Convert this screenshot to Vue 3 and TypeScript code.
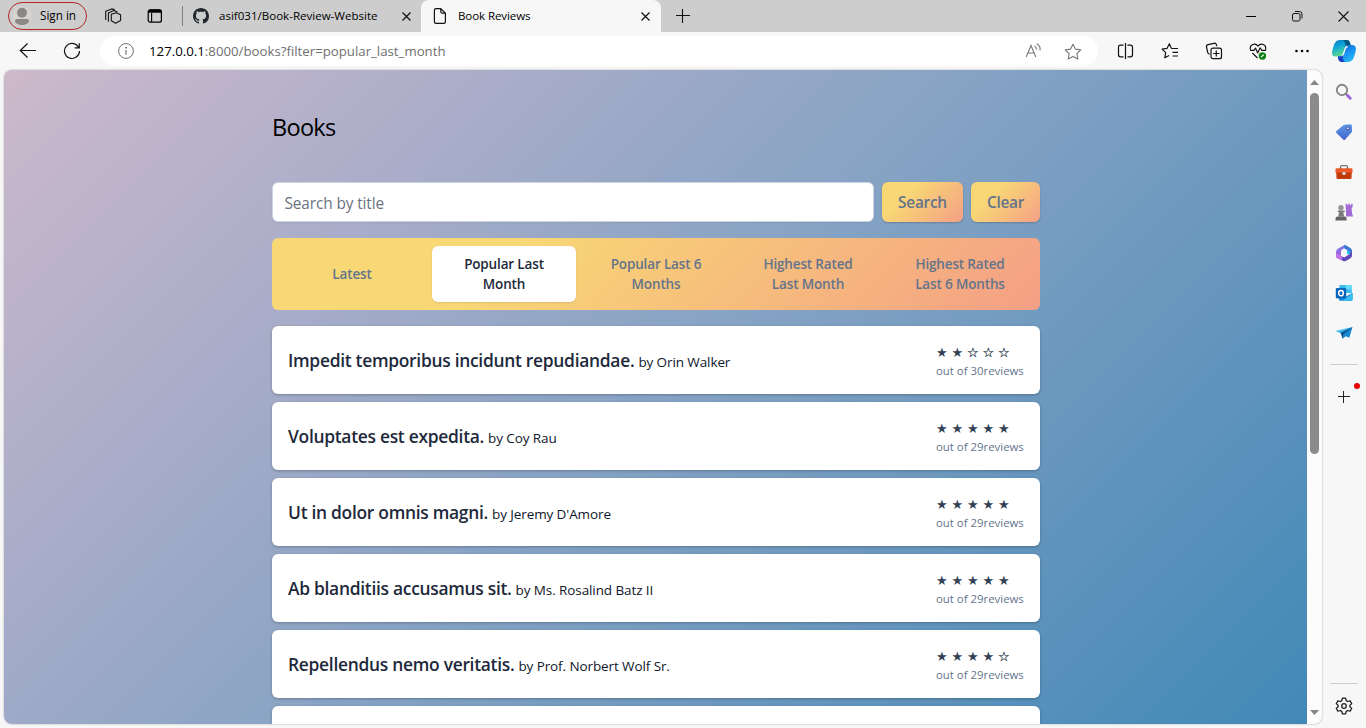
<script setup lang="ts">
interface Filter { lines: string[]; active: boolean }
interface Book { title: string; author: string; rating: number; reviews: number }

const filters: Filter[] = [
  { lines: ['Latest'], active: false },
  { lines: ['Popular Last', 'Month'], active: true },
  { lines: ['Popular Last 6', 'Months'], active: false },
  { lines: ['Highest Rated', 'Last Month'], active: false },
  { lines: ['Highest Rated', 'Last 6 Months'], active: false },
]

const books: Book[] = [
  { title: 'Impedit temporibus incidunt repudiandae.', author: 'Orin Walker', rating: 2, reviews: 30 },
  { title: 'Voluptates est expedita.', author: 'Coy Rau', rating: 5, reviews: 29 },
  { title: 'Ut in dolor omnis magni.', author: "Jeremy D'Amore", rating: 5, reviews: 29 },
  { title: 'Ab blanditiis accusamus sit.', author: 'Ms. Rosalind Batz II', rating: 5, reviews: 29 },
  { title: 'Repellendus nemo veritatis.', author: 'Prof. Norbert Wolf Sr.', rating: 4, reviews: 29 },
]
</script>

<template>
  <div class="window">
    <header class="tabstrip">
      <div class="signin">
        <svg width="20" height="20" viewBox="0 0 20 20"><circle cx="10" cy="10" r="10" fill="#d6d3d0" /><circle cx="10" cy="6.8" r="5" fill="#8b8886" /><path d="M3 14.8q0-1.800 2-1.800h10q2 0 2 1.800c0 2.600-3.200 4.200-7 4.200s-7-1.600-7-4.200z" fill="#8b8886" /></svg>
        <span class="label">Sign in</span>
      </div>
      <svg class="workspaces" width="18" height="18" viewBox="0 0 18 18" fill="none" stroke="#111" stroke-width="1.1" stroke-linejoin="round" stroke-linecap="round"><path d="M7.300 7.200l5-1.500 4.300 2.100v5.800l-5 2.700-4.300-2.500z" /><path d="M4.400 14.300V5.900l5.400-2.300 3.200 1.100M1.700 12.500V4.300l6-2.400 2.700.7" /></svg>
      <svg class="tabmenu" width="16" height="16" viewBox="0 0 16 16"><rect x="1.2" y="1.8" width="13.2" height="12.400" rx="2" fill="none" stroke="#000" stroke-width="1.2" /><path d="M1 4.800V3.600Q1 1.400 3.200 1.400h9.300q2.200 0 2.200 2.200v1.200z" /><path d="M4.600 5v9" stroke="#000" stroke-width="1.1" /></svg>
      <i class="divider"></i>
      <div class="tab">
        <svg width="16" height="16" viewBox="0 0 16 16" fill="#24292f"><path d="M8 0C3.58 0 0 3.58 0 8c0 3.54 2.29 6.53 5.47 7.59.4.07.55-.17.55-.38 0-.19-.01-.82-.01-1.49-2.01.37-2.53-.49-2.69-.94-.09-.23-.48-.94-.82-1.13-.28-.15-.68-.52-.01-.53.63-.01 1.08.58 1.23.82.72 1.21 1.87.87 2.33.66.07-.52.28-.87.51-1.07-1.78-.2-3.64-.89-3.64-3.95 0-.87.31-1.59.82-2.15-.08-.2-.36-1.02.08-2.12 0 0 .67-.21 2.2.82.64-.18 1.32-.27 2-.27s1.360.09 2 .27c1.530-1.040 2.200-.82 2.200-.82.440 1.100.160 1.920.080 2.120.510.560.820 1.270.820 2.150 0 3.070-1.870 3.750-3.650 3.950.290.250.540.730.540 1.480 0 1.070-.01 1.930-.01 2.200 0 .210.150.460.550.380A8.010 8.010 0 0 0 16 8c0-4.420-3.580-8-8-8z" /></svg>
        <span class="tab-title label">asif031/Book-Review-Website</span>
        <svg class="x" width="9" height="9" viewBox="0 0 9 9" stroke="#111" stroke-width="1.2"><path d="M.5.5l8 8M8.500.5l-8 8" /></svg>
      </div>
      <div class="tab active">
        <svg width="14" height="18" viewBox="0 0 14 18" fill="none" stroke="#111" stroke-width="1.2" stroke-linejoin="round"><path d="M3 1.600h4.800l4.600 4.600v8.600q0 1.600-1.600 1.600H3q-1.600 0-1.600-1.600V3.200Q1.400 1.600 3 1.600zM7.800 1.800v2.900q0 1.500 1.500 1.500h3" /></svg>
        <span class="tab-title page-name label">Book Reviews</span>
        <svg class="x" width="9" height="9" viewBox="0 0 9 9" stroke="#111" stroke-width="1.2"><path d="M.5.5l8 8M8.500.5l-8 8" /></svg>
      </div>
      <svg class="newtab" width="14" height="14" viewBox="0 0 14 14" stroke="#111" stroke-width="1.1"><path d="M0 6.500h14M6.500 0v14" /></svg>
      <div class="controls">
        <svg width="10" height="11" viewBox="0 0 10 11" stroke="#000"><path d="M0 5.500h10" /></svg>
        <svg width="11" height="11" viewBox="0 0 11 11" fill="none" stroke="#111"><rect x=".5" y="2.500" width="7.500" height="7.500" rx="1.500" /><path d="M3 .5h4.500q2.500 0 2.500 2.500v4.500" /></svg>
        <svg width="11" height="11" viewBox="0 0 11 11" stroke="#111" stroke-width="1.1"><path d="M.5.500l10 10M10.500.500l-10 10" /></svg>
      </div>
    </header>

    <nav class="toolbar">
      <svg class="back" width="18" height="16" viewBox="0 0 18 16" fill="none" stroke="#111" stroke-width="1.200"><path d="M17 7.500H1.500M8.500.5L1.300 7.500l7.200 7" /></svg>
      <svg class="reload" width="18" height="18" viewBox="0 0 18 18" fill="none" stroke="#111" stroke-width="1.200"><path d="M15.500 5.200A7.500 7.500 0 1 0 16.500 9M16.300 1.200v4.600h-4.600" /></svg>
      <div class="address">
        <svg width="16" height="16" viewBox="0 0 16 16" fill="none" stroke="#707070"><circle cx="8" cy="8" r="7.400" /><path d="M8 7v4.800" stroke-width="1.200" /><circle cx="8" cy="4.700" r=".9" fill="#707070" stroke="none" /></svg>
        <span class="url"><b>127.0.0.1</b>:8000/books?filter=popular_last_month</span>
        <svg class="read" width="17" height="16" viewBox="0 0 17 16" fill="none" stroke="#777" stroke-width="1.100"><path d="M1.200 14L6 2.500 10.800 14M3 10h6M9.600 2.900q2 1.300 1.800 3.900M11.800.8q4 2.300 3.200 6.600" /></svg>
        <svg class="fav" width="18" height="17" viewBox="0 0 18 17" fill="none" stroke="#777" stroke-width="1.100" stroke-linejoin="round"><path d="M9 1.200l2.400 4.900 5.400.8-3.900 3.800.9 5.300L9 13.500 4.200 16l.9-5.300-3.900-3.800 5.400-.8z" /></svg>
      </div>
      <div class="actions">
        <svg width="18" height="18" viewBox="0 0 18 18" fill="none" stroke="#111" stroke-width="1.200"><path d="M6.500 3.200h-3q-2 0-2 2v7.600q0 2 2 2h3M10.500 3.200h3q2 0 2 2v7.600q0 2-2 2h-3M8.500 1v16" /></svg>
        <svg width="18" height="18" viewBox="0 0 18 18" fill="none" stroke="#111" stroke-width="1.150" stroke-linejoin="round"><path d="M10.500 6.500L8.300 1.700 6 6.400l-4.900.7 3.600 3.500-.9 5.200 4.300-2.200M10.500 6.500H17M11.500 10.300H17M11.500 14H17" /></svg>
        <svg width="18" height="18" viewBox="0 0 18 18" fill="none" stroke="#111" stroke-width="1.200"><rect x="6" y="6.200" width="10.500" height="10.500" rx="2" /><path d="M11.250 8.400v6.200M8.200 11.500h6.200M4.600 12.200q-1.600-.3-1.900-1.900L1.500 5q-.4-1.900 1.500-2.400l6-1.300q1.900-.4 2.400 1.400l.4 1.400" /></svg>
        <svg width="18" height="18" viewBox="0 0 18 18" fill="none" stroke="#111" stroke-width="1.100" stroke-linejoin="round"><path d="M1.400 7.600C.3 2.200 6.300.5 9 4.100 11.700.5 17.700 2.200 16.600 7.600M1 8.400h4L6.500 6 8.700 11l2.400-5.200 1.700 2.600H17M3.400 11l5.100 5" /><circle cx="13.400" cy="14" r="3.700" fill="#138016" stroke="none" /><path d="M12 15.200l2.800-2.600" stroke="#fff" /></svg>
        <svg width="18" height="18" viewBox="0 0 18 18"><circle cx="3.500" cy="9" r="1.300" /><circle cx="9" cy="9" r="1.300" /><circle cx="14.500" cy="9" r="1.300" /></svg>
      </div>
      <svg class="copilot" width="24" height="22" viewBox="0 0 24 22">
        <defs>
          <linearGradient id="cpa" x2=".4" y2="1"><stop stop-color="#0875ba" /><stop offset=".45" stop-color="#10a8da" /><stop offset="1" stop-color="#62dc86" /></linearGradient>
          <linearGradient id="cpb" x2=".6" y2="1"><stop stop-color="#184dc9" /><stop offset=".5" stop-color="#168cf0" /><stop offset="1" stop-color="#28b9f2" /></linearGradient>
        </defs>
        <path d="M16 5h3.500Q24 5 24 8.800c-.3 3.300-1.600 8-3 10.500Q19.300 22 16.500 22H9.200q-2 0-3-3L6 16.300h3q1.600 0 2.300-2.300l2.500-7Q14.500 5 16 5z" fill="url(#cpb)" />
        <path d="M7.500 0h7.600q2.200 0 3 3l.5 2.300H16q-2.100 0-2.900 2.200l-2.300 6.600Q10 16.500 8 16.500H3.300Q0 16.500 0 13c.3-3.300 1.600-7.600 3-10.300Q4.500 0 7.500 0z" fill="url(#cpa)" />
        <path d="M11 0h4.100q2.200 0 3 3l.5 2.300H16q-1.800 0-2.500 1.600C13.200 3.500 13 1.500 11 0z" fill="#075780" />
        <path d="M6 16.300h3q1.100 0 1.800-1.200C10.800 18 11 21 13 22H9.200q-2 0-3-3z" fill="#183fc6" />
        <path d="M14.800 5.700q-1.200.5-1.700 1.800l-2.300 6.600q-.6 1.800-2 2.300.9.200 2.100-.8 1.200-1 1.600-2.500l1.100-3.800q.7-2 2.400-2.100z" fill="#f4fbff" />
      </svg>
    </nav>

    <div class="body">
      <div class="frame">
        <main class="page">
          <div class="container">
            <h1>Books</h1>
            <form class="search" @submit.prevent>
              <input type="text" placeholder="Search by title" />
              <button class="go" type="submit">Search</button>
              <button class="clear" type="button">Clear</button>
            </form>
            <div class="filters">
              <a v-for="f in filters" :key="f.lines.join(' ')" :class="{ on: f.active }">
                <span v-for="line in f.lines" :key="line">{{ line }}</span>
              </a>
            </div>
            <ul class="books">
              <li v-for="b in books" :key="b.title">
                <div class="name"><span class="title">{{ b.title }}</span><span class="author">by {{ b.author }}</span></div>
                <div class="rate">
                  <div class="stars"><span v-for="n in 5" :key="n" :class="{ empty: n > b.rating }">{{ n <= b.rating ? '★' : '☆' }}</span></div>
                  <div class="count">out of {{ b.reviews }}reviews</div>
                </div>
              </li>
              <li></li>
            </ul>
          </div>
        </main>
        <div class="scrollbar">
          <svg width="9" height="5" viewBox="0 0 9 5" fill="#858585"><path d="M0 5L4.500 0 9 5z" /></svg>
          <i class="thumb"></i>
          <svg width="9" height="5" viewBox="0 0 9 5" fill="#858585"><path d="M0 0h9L4.500 5z" /></svg>
        </div>
      </div>

      <aside class="sidebar">
        <svg width="18" height="18" viewBox="0 0 18 18" fill="none"><circle cx="7" cy="7" r="5.200" stroke="#858585" stroke-width="1.900" /><path d="M10.800 10.800l1.500 1.500" stroke="#777" stroke-width="2" /><path d="M12.500 12.500l2.700 2.700" stroke="#a166d8" stroke-width="3" stroke-linecap="round" /></svg>
        <svg width="18" height="18" viewBox="0 0 18 18"><defs><linearGradient id="tg" x2="0" y2="1"><stop stop-color="#619ae9" /><stop offset="1" stop-color="#4264cc" /></linearGradient></defs><path d="M9.400 1.800l6-.6q1.600 0 1.600 1.500v5.700q0 .7-.6 1.200l-6.200 6.800q-1 1-2 0L1.400 10q-.9-1 0-2L8 2.500q.6-.6 1.400-.7z" fill="url(#tg)" /><circle cx="12.800" cy="5.300" r="1.500" fill="#e8edff" stroke="#304591" stroke-width="1" /></svg>
        <svg width="18" height="18" viewBox="0 0 18 18"><path d="M5.500 6V4q0-1.400 1.400-1.400h4.200q1.400 0 1.400 1.400v2" fill="none" stroke="#777" stroke-width="1.400" /><rect x=".5" y="5.200" width="17" height="5.300" rx="1.400" fill="#e9592b" /><path d="M1.400 9.500h15.200v5q0 1.500-1.500 1.500H2.900q-1.500 0-1.500-1.500z" fill="#c33b0d" /><circle cx="9" cy="10.400" r="1.700" fill="#d6dde0" /></svg>
        <svg width="18" height="18" viewBox="0 0 18 18"><path d="M10.500.7h1.600v1.500h1.100V.7H15v1.500h1.100V.7h1.500V4l-1 1 .6 6.500q.8.500.8 2h-7V8z" fill="#a36ad6" /><g fill="#7a7a7a"><circle cx="6" cy="4.800" r="2.700" fill="#969696" /><rect x="2.500" y="7.400" width="7.500" height="1.700" rx=".8" /><path d="M4.200 8.500h4l.9 5H3.200z" /><path d="M.5 17.500v-1.800q0-2.200 2.200-2.200h6.900q2 0 2 2.200v1.800z" fill="#666" /></g></svg>
        <svg width="18" height="18" viewBox="0 0 18 18">
          <defs><linearGradient id="ma" x2="0" y2="1"><stop stop-color="#6d7de8" /><stop offset="1" stop-color="#b45fd6" /></linearGradient></defs>
          <path d="M10 .8L3.200 4.400Q1 5.600 1 8v5.500l5-2V7.200q0-1 .8-1.500L9.500 4z" fill="url(#ma)" />
          <path d="M10 .8q-1.200 1-1 3.500l3 1.800V9l5 2.500V6.800q0-1.800-1.600-2.700z" fill="#3e78d2" />
          <path d="M17 7.500v4q0 1.800-1.500 2.700l-4.200 2.600q-1.800 1-3.600 0L3 14.200 6 12l2 1q1 .5 2 0l4-2.500q1-.8 1-2z" fill="#6249ba" />
          <path d="M1 9.500v3q0 1 1 1.700l5.700 2.600Q6 15.500 7.500 12.800L6 12z" fill="#c473e2" />
          <path d="M12 5.800l3 2v1.500q0 1-1 1.700l-2-1.200z" fill="#29bdea" />
          <path d="M9 5.800l2.900 1.700v3.200L9 12.400l-2.900-1.700V7.500z" fill="#f7f7f7" />
        </svg>
        <svg width="18" height="18" viewBox="0 0 18 18"><path d="M5.500 1h10q1.300 0 1.300 1.300V9H4.300V2.300Q4.300 1 5.500 1z" fill="#39b9ef" /><path d="M10.500 1h5q1.300 0 1.300 1.300v3.200h-6.300z" fill="#66daf7" /><path d="M4 8.800l7 3.600 6.500-3.700v6.800q0 1.200-1.200 1.200H5.200Q4 16.700 4 15.500z" fill="#168ddc" /><path d="M17.500 9v6.500q0 1.200-1.200 1.200H7.600z" fill="#38bdf2" /><rect x=".8" y="4" width="10.400" height="10.400" rx="1.300" fill="#0864b8" /><ellipse cx="6" cy="9.200" rx="2.300" ry="2.600" fill="none" stroke="#fff" stroke-width="1.500" /></svg>
        <svg width="18" height="18" viewBox="0 0 18 18"><path d="M.5 7L17.500 3 7.500 10z" fill="#3bb8ee" /><path d="M17.500 3L7 9.500l.7 5.200 3-2.500 3.600 1.600z" fill="#1788d2" /><path d="M17.500 3L5.500 8.800l2.200 5.900.8-4.400z" fill="#12538d" /></svg>
        <i class="line"></i>
        <div class="add">
          <svg width="12" height="12" viewBox="0 0 12 12" stroke="#222"><path d="M0 5.500h12M5.500 0v12" /></svg>
          <i class="badge"></i>
        </div>
        <i class="line bottom"></i>
        <svg class="gear" width="18" height="18" viewBox="0 0 18 18" fill="none" stroke="#222" stroke-width="1.300" stroke-linejoin="round"><path d="M7.400 1.200h3.200l.6 2.400 1.500.9 2.400-.7 1.600 2.800L14.900 8.300v1.400l1.800 1.700-1.600 2.800-2.400-.7-1.500.9-.6 2.400H7.400l-.6-2.400-1.500-.9-2.400.7-1.600-2.800 1.800-1.700V8.300L1.300 6.600l1.600-2.800 2.400.7 1.500-.9z" /><circle cx="9" cy="9" r="2.300" /></svg>
      </aside>
    </div>
  </div>
</template>

<style>
html, body { overflow: hidden; }
</style>

<style scoped>
* { box-sizing: border-box; }
svg, i { display: block; flex: none; }
.window { width: 1366px; height: 728px; display: flex; flex-direction: column; overflow: hidden; background: #f7f7f7; font-family: "Open Sans", "Noto Sans", sans-serif; color: #000; }

.tabstrip { height: 32px; flex: none; display: flex; align-items: center; background: #cdcdcd; white-space: nowrap; }
.label { padding-bottom: 2px; }
.signin { width: 79px; height: 28px; margin-left: 8px; padding-left: 3px; display: flex; align-items: center; gap: 8px; border: 1px solid #b5252a; border-radius: 14px; font-size: 11.700px; }
.workspaces { margin-left: 17px; }
.tabmenu { margin-left: 25px; }
.divider { width: 1px; height: 20px; margin-left: 19px; background: #808080; }
.tab { width: 238px; height: 32px; padding: 0 10px; display: flex; align-items: center; font-size: 11.550px; }
.tab-title { margin-left: 10px; }
.page-name { margin-left: 11px; letter-spacing: -.1px; }
.x { margin-left: auto; }
.tab.active { width: 240px; padding: 0 11px 0 12px; background: #f7f7f7; border-radius: 8px 8px 0 0; }
.newtab { margin-left: 15px; }
.controls { display: flex; gap: 35.500px; margin-left: auto; margin-right: 17px; }

.toolbar { height: 38px; flex: none; display: flex; align-items: center; }
.back { margin-left: 19px; }
.reload { margin-left: 26px; }
.address { width: 998px; height: 30px; margin-left: 19px; padding: 0 16px 0 18px; display: flex; align-items: center; border-radius: 15px; background: #fff; font-size: 13.240px; color: #6f6f6f; }
.url { margin-left: 15px; }
.url b { font-weight: 400; color: #000; }
.read { margin-left: auto; }
.fav { margin-left: 22px; }
.actions { display: flex; gap: 26px; margin-left: 19px; }
.copilot { margin-left: 21px; }

.body { display: flex; height: 658px; }
.frame { display: flex; width: 1318px; height: 654px; margin-left: 4px; overflow: hidden; border-radius: 8px; background: #fcfcfc; box-shadow: 0 0 2px rgba(0, 0, 0, .35); }
.page { width: 1303px; overflow: hidden; background: linear-gradient(135deg, #cdb9cb 0%, #aaadc9 25%, #86a3c4 50%, #6495bd 75%, #4189b8 100%); }
.container { width: 768px; margin: 39px 0 0 268px; }
h1 { margin: 0; height: 37px; font-size: 23.500px; line-height: 36px; font-weight: 400; letter-spacing: -.7px; }
.search { display: flex; gap: 8px; margin-top: 36px; }
input { width: 602px; height: 40px; padding: 3px 11.500px 0; border: 1px solid #cbd5e1; border-radius: 6px; outline: 0; font: 400 15.400px "Open Sans", sans-serif; letter-spacing: -.12px; box-shadow: 0 1px 2px rgba(0, 0, 0, .06); }
input::placeholder { color: #6b7280; opacity: 1; }
button { height: 40px; padding: 0; border: 0; border-radius: 6px; color: #64748b; font: 600 15.400px "Open Sans", sans-serif; letter-spacing: -.25px; background: linear-gradient(135deg, #f8d775 30%, #f49f85 100%); box-shadow: 0 1px 2px rgba(0, 0, 0, .2); }
.go { width: 81px; }
.clear { width: 69px; }
.filters { height: 72px; margin-top: 16px; padding: 8px; display: flex; gap: 8px; border-radius: 6px; background: linear-gradient(135deg, #f8d775 30%, #f49f85 100%); }
.filters a { flex: 1; display: flex; flex-direction: column; align-items: center; justify-content: center; border-radius: 6px; color: #64748b; font-size: 13.500px; line-height: 20px; font-weight: 600; letter-spacing: -.15px; }
.filters .on { color: #1e293b; background: #fff; box-shadow: 0 1px 2px rgba(0, 0, 0, .1); }
.books { list-style: none; margin: 16px 0 0; padding: 0; display: flex; flex-direction: column; gap: 8px; }
.books li { height: 68px; padding: 2px 16px 0; display: flex; align-items: center; justify-content: space-between; border-radius: 6px; background: #fff; box-shadow: 0 1px 3px rgba(0, 0, 0, .25); }
.name { display: flex; align-items: baseline; padding-bottom: 2px; white-space: nowrap; }
.title { color: #1e293b; font-size: 17.400px; line-height: 28px; font-weight: 600; letter-spacing: -.280px; }
.author { margin-left: 4px; color: #0f172a; font-size: 13.500px; letter-spacing: -.1px; }
.rate { width: 88px; white-space: nowrap; }
.stars { display: flex; height: 20px; line-height: 20px; font-family: "DejaVu Sans", sans-serif; font-size: 13px; color: #334155; }
.stars span { width: 15.500px; }
.stars .empty { -webkit-text-stroke: .25px #334155; }
.count { height: 16px; line-height: 16px; font-size: 11.400px; color: #64748b; }

.scrollbar { width: 15px; padding: 10px 0 9px; display: flex; flex-direction: column; align-items: center; }
.thumb { width: 9px; height: 361px; margin: 8px 0 auto; border-radius: 5px; background: #8b8b8b; }

.sidebar { width: 44px; display: flex; flex-direction: column; align-items: center; gap: 22.150px; padding-top: 13px; }
.line { width: 28px; height: 1px; background: #cfcfcf; }
.add { position: relative; margin-top: 4px; }
.badge { position: absolute; width: 6px; height: 6px; left: 16px; top: -8px; border-radius: 50%; background: #e60000; }
.line.bottom { margin-top: auto; }
.gear { margin: -9px 0 13px; }
</style>
